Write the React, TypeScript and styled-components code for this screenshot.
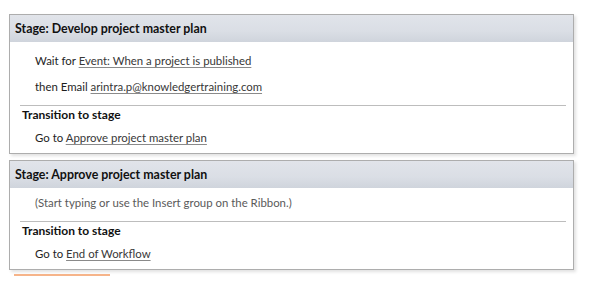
import styled, { createGlobalStyle } from "styled-components";

const GlobalStyle = createGlobalStyle`
  body {
    margin: 0;
    background: #ffffff;
    font-family: "Segoe UI", Lato, "Liberation Sans", sans-serif;
  }
`;

type Step = { lead: string; link?: string; placeholder?: boolean };

type StageData = {
  title: string;
  steps: Step[];
  target: string;
  firstTop: number;
};

const stages: StageData[] = [
  {
    title: "Stage: Develop project master plan",
    steps: [
      { lead: "Wait for", link: "Event: When a project is published" },
      { lead: "then Email", link: "arintra.p@knowledgertraining.com" },
    ],
    target: "Approve project master plan",
    firstTop: 6,
  },
  {
    title: "Stage: Approve project master plan",
    steps: [
      {
        lead: "(Start typing or use the Insert group on the Ribbon.)",
        placeholder: true,
      },
    ],
    target: "End of Workflow",
    firstTop: 2,
  },
];

const Stage: React.FC<{ stage: StageData }> = ({ stage }) => {
  return (
    <Card>
      <Header>{stage.title}</Header>
      <Body $top={stage.firstTop}>
        {stage.steps.map((s, i) => (
          <Line key={i} $muted={s.placeholder}>
            {s.lead}
            {s.link && (
              <>
                {" "}
                <Link>{s.link}</Link>
              </>
            )}
          </Line>
        ))}
        <Divider />
        <Heading>Transition to stage</Heading>
        <GoLine>
          Go to <Link>{stage.target}</Link>
        </GoLine>
      </Body>
    </Card>
  );
};

const App: React.FC = () => {
  return (
    <>
      <GlobalStyle />
      <Page>
        {stages.map((s) => (
          <Stage key={s.title} stage={s} />
        ))}
        <Caret />
      </Page>
    </>
  );
};

export default App;

const Page = styled.div`
  padding: 14px 0 0 9px;
  width: 565px;
  display: flex;
  flex-direction: column;
  gap: 6px;
`;

const Card = styled.section`
  border: 1px solid #adadad;
  background: #ffffff;
  box-shadow: 2px 2px 3px rgba(0, 0, 0, 0.12);
  display: flex;
  flex-direction: column;
`;

const Header = styled.div`
  height: 27px;
  box-sizing: border-box;
  padding-left: 5px;
  display: flex;
  align-items: center;
  background: linear-gradient(180deg, #e1e4ea 0%, #dadee5 60%, #cfd4dc 100%);
  font-size: 12.4px;
  font-weight: 700;
  color: #111111;
`;

const Body = styled.div<{ $top: number }>`
  padding: ${(p) => p.$top}px 7px 2px 10px;
  display: flex;
  flex-direction: column;
`;

const Line = styled.div<{ $muted?: boolean }>`
  height: 26px;
  line-height: 26px;
  padding-left: 15px;
  font-size: 11.4px;
  color: ${(p) => (p.$muted ? "#5a5a5a" : "#1e1e1e")};
`;

const Link = styled.span`
  color: #383838;
  text-decoration: underline;
  text-decoration-color: #8a8a8a;
  text-underline-offset: 2px;
`;

const Divider = styled.div`
  margin-top: 5px;
  height: 1px;
  background: #bdbdbd;
`;

const Heading = styled.div`
  height: 17px;
  line-height: 17px;
  padding-left: 2px;
  font-size: 12px;
  font-weight: 700;
  color: #111111;
`;

const GoLine = styled(Line)`
  margin-top: 2px;
`;

const Caret = styled.div`
  margin: -2px 0 0 5px;
  width: 96px;
  height: 2px;
  background: #f6b48a;
`;
